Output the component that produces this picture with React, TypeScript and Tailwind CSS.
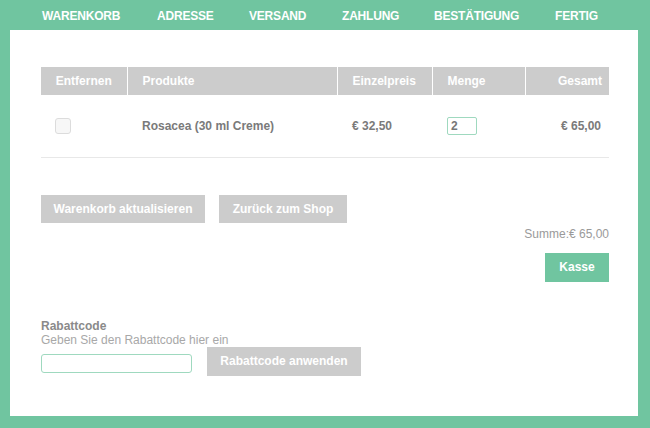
const steps = [
  { label: 'WARENKORB', w: 'w-[115px]' },
  { label: 'ADRESSE', w: 'w-[92px]' },
  { label: 'VERSAND', w: 'w-[93px]' },
  { label: 'ZAHLUNG', w: 'w-[92px]' },
  { label: 'BESTÄTIGUNG', w: 'w-[121px]' },
  { label: 'FERTIG', w: 'w-[50px]' },
];

export default function App() {
  return (
    <div className="w-[650px] h-[428px] bg-[#70c5a0] font-['Liberation_Sans',Arial,sans-serif] text-[12px] overflow-hidden">
      {/* Checkout steps */}
      <nav className="h-[30px] flex items-center pl-[42px] pt-[2px]">
        {steps.map((s) => (
          <span key={s.label} className={`${s.w} shrink-0 whitespace-nowrap text-white font-bold text-[12px] leading-none tracking-[-0.2px]`}>
            {s.label}
          </span>
        ))}
      </nav>

      <div className="ml-[10px] w-[628px] h-[386px] bg-white px-[31px] pt-[37px]">
        <table className="w-[568px] border-collapse table-fixed">
          <thead>
            <tr className="bg-[#cccccc] text-white font-bold h-[28px]">
              <th className="w-[86px] text-center font-bold border-r border-white">Entfernen</th>
              <th className="w-[210px] text-left pl-[15px] font-bold border-r border-white">Produkte</th>
              <th className="w-[95px] text-left pl-[15px] font-bold border-r border-white">Einzelpreis</th>
              <th className="w-[93px] text-left pl-[15px] font-bold border-r border-white">Menge</th>
              <th className="w-[84px] text-right pr-[7px] font-bold">Gesamt</th>
            </tr>
          </thead>
          <tbody>
            <tr className="h-[62px] border-b border-[#e8e8e8] text-[#7a7a7a] font-bold">
              <td>
                <div className="ml-[14px] w-[16px] h-[16px] rounded-[3px] border border-[#dcdcdc] bg-[#f7f7f7]" />
              </td>
              <td className="pl-[15px]">Rosacea (30 ml Creme)</td>
              <td className="pl-[15px]">€ 32,50</td>
              <td className="pl-[15px]">
                <div className="w-[30px] h-[18px] border border-[#9fd9bf] rounded-[2px] pl-[3px] leading-[16px] text-[#777]">2</div>
              </td>
              <td className="text-right pr-[8px]">€ 65,00</td>
            </tr>
          </tbody>
        </table>

        <div className="mt-[37px] flex gap-[14px]">
          <button className="w-[164px] h-[28px] bg-[#cccccc] text-white font-bold">Warenkorb aktualisieren</button>
          <button className="w-[128px] h-[28px] bg-[#cccccc] text-white font-bold">Zurück zum Shop</button>
        </div>

        <div className="w-[568px] flex flex-col items-end">
          <p className="mt-[4px] text-[#9a9a9a] leading-[14px]">Summe:€ 65,00</p>
          <button className="mt-[12px] w-[64px] h-[29px] bg-[#70c5a0] text-white font-bold">Kasse</button>
        </div>

        <div className="mt-[37px] flex flex-col">
          <p className="font-bold text-[#8a8a8a] leading-[14px]">Rabattcode</p>
          <p className="text-[#a8a8a8] leading-[14px]">Geben Sie den Rabattcode hier ein</p>
          <div className="flex items-start gap-[15px]">
            <div className="mt-[7px] w-[151px] h-[19px] border border-[#9fd9bf] rounded-[3px]" />
            <button className="w-[154px] h-[29px] bg-[#cccccc] text-white font-bold">Rabattcode anwenden</button>
          </div>
        </div>
      </div>
    </div>
  );
}
